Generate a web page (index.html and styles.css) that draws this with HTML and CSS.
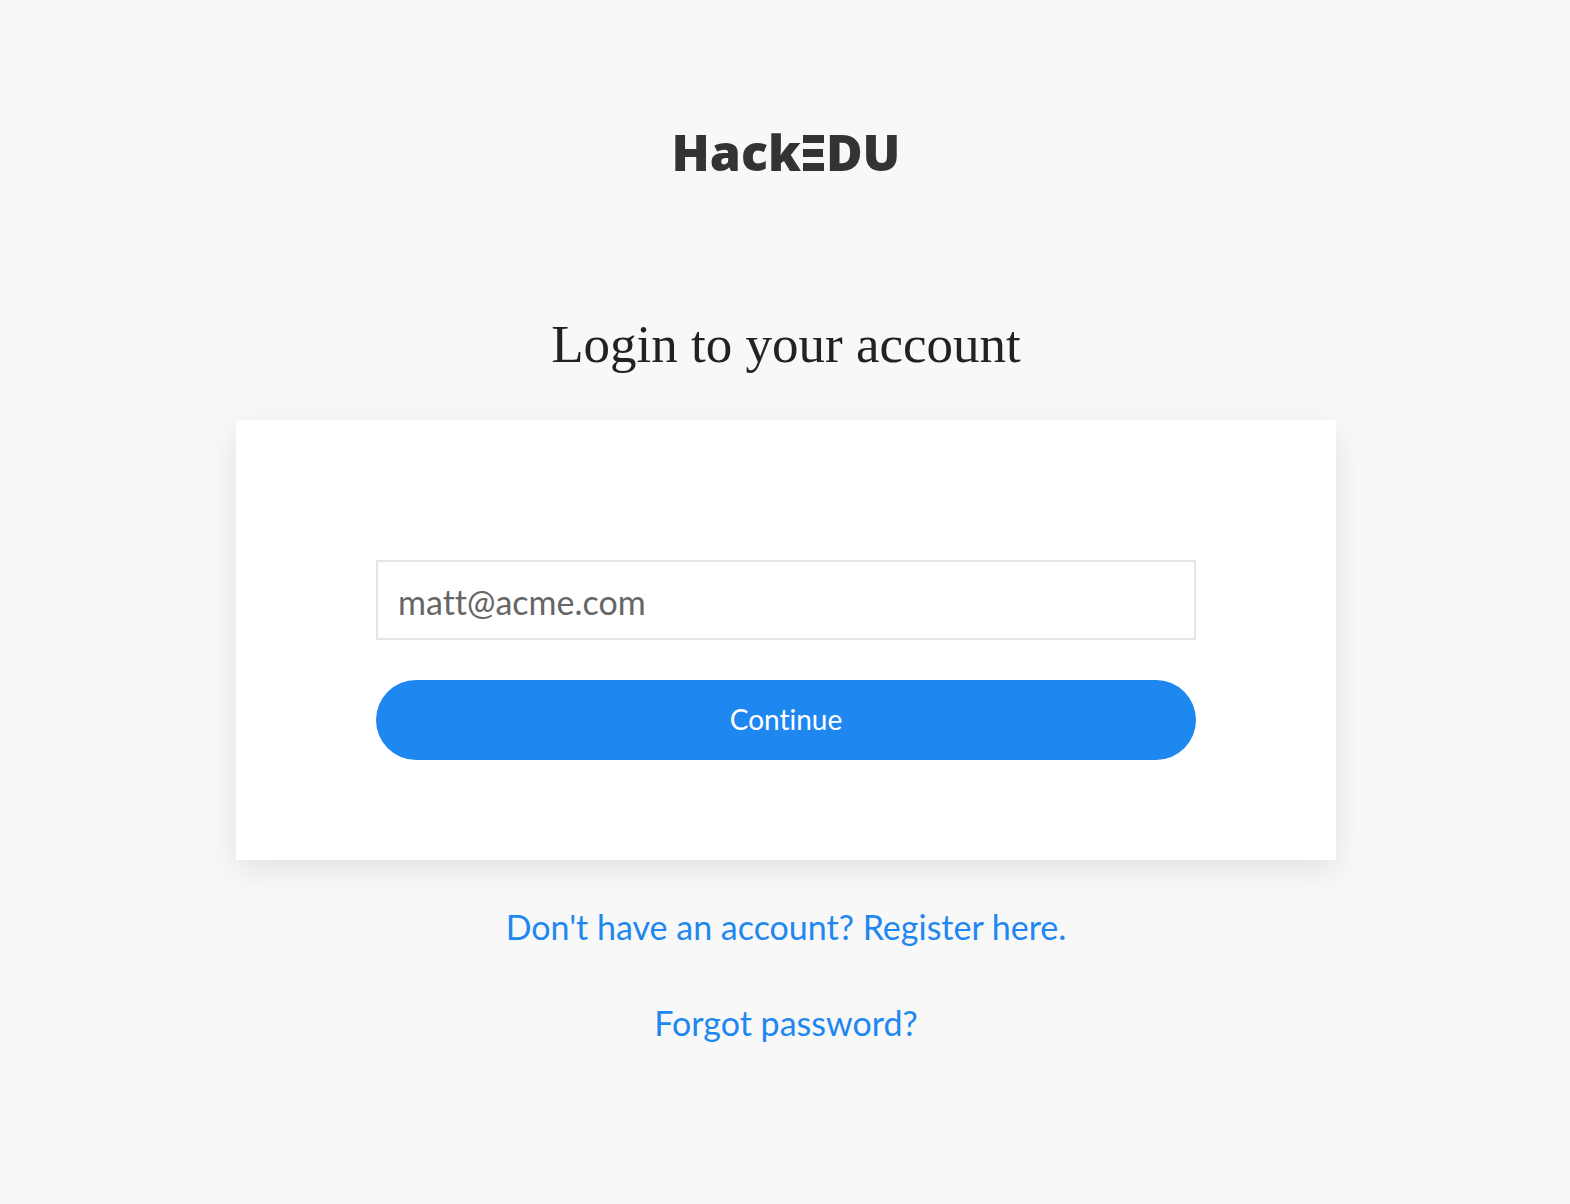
FILE: index.html
```html
<!DOCTYPE html>
<html lang="en">
<head>
<meta charset="utf-8">
<meta name="viewport" content="width=device-width, initial-scale=1">
<title>HackEDU</title>
<link rel="stylesheet" href="styles.css">
</head>
<body>
<main class="login">
  <div class="logo" role="img" aria-label="HackEDU">
    <span>Hack</span>
    <svg class="logo-bars" viewBox="0 0 21 36" aria-hidden="true"><path d="M0 0h21v8H0zM0 14h20v8H0zM0 28h21v8H0z"/></svg>
    <span>DU</span>
  </div>
  <h1 class="title">Login to your account</h1>
  <form class="card">
    <input class="field" type="email" name="email" placeholder="matt@acme.com" aria-label="Email">
    <button class="submit" type="submit">Continue</button>
  </form>
  <nav class="links">
    <a href="#register">Don't have an account? Register here.</a>
    <a href="#forgot">Forgot password?</a>
  </nav>
</main>
</body>
</html>
```
FILE: styles.css
```css
* {
  box-sizing: border-box;
}

body {
  margin: 0;
  min-height: 100vh;
  background: #f8f8f8;
  color: #222;
  font-family: Lato, sans-serif;
}

.login {
  display: flex;
  flex-direction: column;
  align-items: center;
  padding: 118px 20px 80px 22px;
}

.logo {
  display: flex;
  align-items: baseline;
  gap: 2px;
  color: #333;
  font-family: "Open Sans", sans-serif;
  font-size: 50px;
  font-weight: 800;
  line-height: 68px;
}

.logo-bars {
  width: 21px;
  height: 36px;
  fill: #333;
}

.title {
  margin: 122px 0 40px;
  font-family: "Source Serif Pro", "Liberation Serif", serif;
  font-size: 53px;
  font-weight: 400;
  line-height: 72px;
}

.card {
  display: flex;
  flex-direction: column;
  gap: 40px;
  width: 100%;
  max-width: 1100px;
  padding: 140px 140px 100px;
  background: #fff;
  box-shadow: 0 10px 30px rgba(0, 0, 0, 0.09);
}

.field {
  width: 100%;
  height: 80px;
  padding: 2px 20px 0;
  border: 2px solid #e4e4e4;
  border-radius: 0;
  background: #fff;
  color: #222;
  font: 400 34px Lato, sans-serif;
  font-variant-ligatures: none;
}

.field::placeholder {
  color: #666;
  opacity: 1;
}

.submit {
  height: 80px;
  padding: 0 40px 2px;
  border: 0;
  border-radius: 40px;
  background: #1f87f0;
  color: #fff;
  font: 400 28px Lato, sans-serif;
  font-variant-ligatures: none;
  cursor: pointer;
}

.links {
  display: flex;
  flex-direction: column;
  align-items: center;
  gap: 48px;
  margin-top: 43px;
  font-size: 34px;
  line-height: 48px;
}

.links a {
  color: #1f87f0;
  text-decoration: none;
}
```
